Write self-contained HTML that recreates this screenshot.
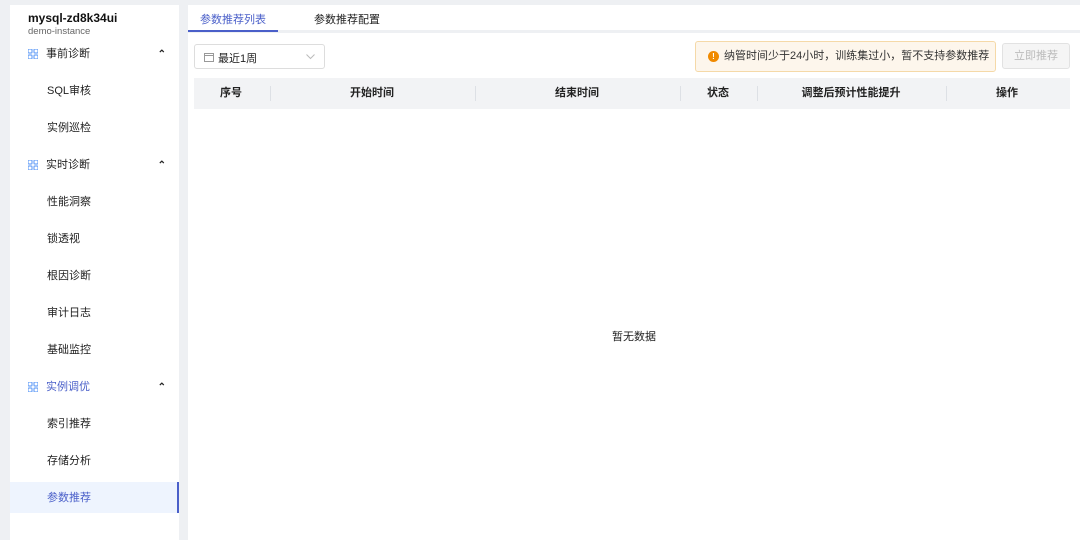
<!DOCTYPE html>
<html><head><meta charset="utf-8"><style>
*{margin:0;padding:0;box-sizing:border-box}
body{width:1080px;height:540px;background:#eef0f3;font-family:"Liberation Sans","Noto Sans CJK SC",sans-serif;font-size:11px;color:#222;position:relative;overflow:hidden}
.side{position:absolute;left:10px;top:5px;width:169px;height:535px;background:#fff}
.t1{position:absolute;left:18px;top:6px;font-weight:bold;font-size:12px;color:#111}
.t2{position:absolute;left:18px;top:21px;font-size:9.5px;color:#666}
.grp{position:absolute;left:18px;height:20px;line-height:20px;width:150px}
.grp .ic{position:absolute;left:0;top:5px;width:10px;height:10px}
.grp .tx{position:absolute;left:18px}
.grp .ar{position:absolute;right:12px;top:1px;font-size:10px;font-weight:bold}
.it{position:absolute;left:37px;height:20px;line-height:20px}
.act{position:absolute;left:10px;top:482px;width:169px;height:31px;background:#eef4fe;border-right:2px solid #4a5fc9}
.main{position:absolute;left:188px;top:5px;width:892px;height:535px;background:#fff}
.tabs{position:absolute;left:0;top:0;width:892px;height:28px;border-bottom:3px solid #eef0f3}
.tab{position:absolute;top:6px;font-size:11px}
.tabline{position:absolute;left:0;top:25px;width:90px;height:2px;background:#4a5fc9}
.sel{position:absolute;left:6px;top:39px;width:131px;height:25px;border:1px solid #ddd;border-radius:3px}
.alert{position:absolute;left:507px;top:36px;width:301px;height:31px;background:#fdf6ec;border:1px solid #f5d9a8;border-radius:3px;line-height:29px;padding-left:28px;color:#333}
.alert i{position:absolute;left:12px;top:9px;width:11px;height:11px;border-radius:50%;background:#f08a00;color:#fff;font-size:8px;line-height:11px;text-align:center;font-style:normal;font-weight:bold}
.btn{position:absolute;left:814px;top:38px;width:68px;height:26px;border:1px solid #e2e2e2;border-radius:3px;background:#f5f5f5;color:#bbb;text-align:center;line-height:24px}
.th{position:absolute;left:6px;top:73px;width:876px;height:31px;background:#f2f3f5;font-weight:bold}
.th span{position:absolute;top:0;line-height:31px;transform:translateX(-50%)}
.th b{position:absolute;top:8px;width:1px;height:15px;background:#dde0e5}
.empty{position:absolute;left:424px;top:323px}
</style></head><body>
<div class="side">
<div class="t1">mysql-zd8k34ui</div>
<div class="t2">demo-instance</div>
</div>
<div class="act"></div>
<svg width="0" height="0" style="position:absolute"><defs><g id="g"><rect x="0" y="0" width="4" height="4" rx="1" fill="none" stroke="#6ea4f7" stroke-width="1.2"/><rect x="6" y="0" width="4" height="4" rx="1" fill="none" stroke="#6ea4f7" stroke-width="1.2"/><rect x="0" y="6" width="4" height="4" rx="1" fill="none" stroke="#6ea4f7" stroke-width="1.2"/><rect x="6" y="6" width="4" height="4" rx="1" fill="none" stroke="#6ea4f7" stroke-width="1.2"/></g></defs></svg>
<div class="grp" style="left:28px;top:44px"><svg class="ic" viewBox="0 0 10 10"><use href="#g"/></svg><span class="tx">事前诊断</span><span class="ar">⌃</span></div>
<div class="it" style="left:47px;top:81px">SQL审核</div>
<div class="it" style="left:47px;top:118px">实例巡检</div>
<div class="grp" style="left:28px;top:155px"><svg class="ic" viewBox="0 0 10 10"><use href="#g"/></svg><span class="tx">实时诊断</span><span class="ar">⌃</span></div>
<div class="it" style="left:47px;top:192px">性能洞察</div>
<div class="it" style="left:47px;top:229px">锁透视</div>
<div class="it" style="left:47px;top:266px">根因诊断</div>
<div class="it" style="left:47px;top:303px">审计日志</div>
<div class="it" style="left:47px;top:340px">基础监控</div>
<div class="grp" style="left:28px;top:377px;color:#4a5fc9"><svg class="ic" viewBox="0 0 10 10"><use href="#g"/></svg><span class="tx">实例调优</span><span class="ar" style="color:#222">⌃</span></div>
<div class="it" style="left:47px;top:414px">索引推荐</div>
<div class="it" style="left:47px;top:451px">存储分析</div>
<div class="it" style="left:47px;top:488px;color:#4a5fc9">参数推荐</div>
<div class="main">
<div class="tabs"><span class="tab" style="left:12px;color:#4a5fc9">参数推荐列表</span><span class="tab" style="left:126px">参数推荐配置</span><div class="tabline"></div></div>
<div class="sel"><svg style="position:absolute;left:9px;top:7px" width="10" height="10" viewBox="0 0 10 10"><rect x="0.5" y="1.5" width="9" height="8" fill="none" stroke="#999"/><line x1="0.5" y1="3.5" x2="9.5" y2="3.5" stroke="#999"/></svg><span style="position:absolute;left:23px;top:5px">最近1周</span><svg style="position:absolute;right:9px;top:9px" width="9" height="6" viewBox="0 0 9 6"><path d="M0.5 0.5L4.5 4.5L8.5 0.5" fill="none" stroke="#bbb"/></svg></div>
<div class="alert"><i>!</i>纳管时间少于24小时，训练集过小，暂不支持参数推荐</div>
<div class="btn">立即推荐</div>
<div class="th">
<span style="left:37px">序号</span><b style="left:76px"></b>
<span style="left:178px">开始时间</span><b style="left:281px"></b>
<span style="left:383px">结束时间</span><b style="left:486px"></b>
<span style="left:524px">状态</span><b style="left:563px"></b>
<span style="left:657px">调整后预计性能提升</span><b style="left:752px"></b>
<span style="left:813px">操作</span>
</div>
<div class="empty">暂无数据</div>
</div>
</body></html>
